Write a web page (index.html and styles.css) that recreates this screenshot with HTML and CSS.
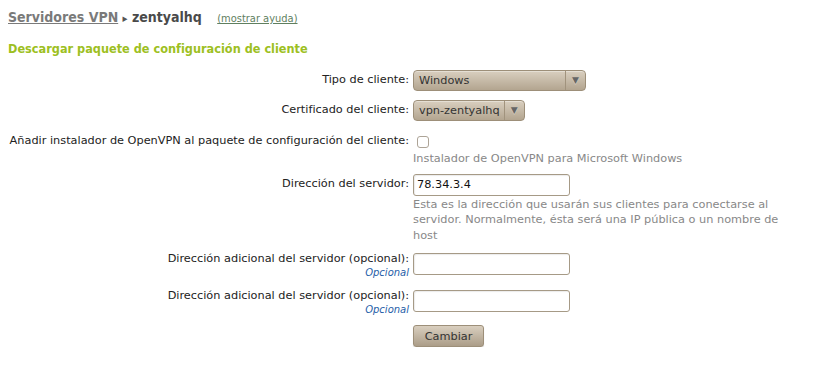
FILE: index.html
```html
<!DOCTYPE html>
<html lang="es">
<head>
<meta charset="utf-8">
<link rel="stylesheet" href="styles.css">
</head>
<body>
<div class="page">
  <h1 class="title"><a class="crumb" href="#">Servidores VPN</a> <span class="sep">&#9656;</span> zentyalhq <a class="help" href="#">(mostrar ayuda)</a></h1>
  <h2 class="subtitle">Descargar paquete de configuración de cliente</h2>
  <div class="form">
    <div class="label">Tipo de cliente:</div>
    <div class="field">
      <div class="select wide"><span class="sel-text">Windows</span><span class="sel-arrow">&#9660;</span></div>
    </div>

    <div class="label">Certificado del cliente:</div>
    <div class="field">
      <div class="select"><span class="sel-text">vpn-zentyalhq</span><span class="sel-arrow">&#9660;</span></div>
    </div>

    <div class="label check">Añadir instalador de OpenVPN al paquete de configuración del cliente:</div>
    <div class="field">
      <span class="checkbox"></span>
      <div class="note short">Instalador de OpenVPN para Microsoft Windows</div>
    </div>

    <div class="label">Dirección del servidor:</div>
    <div class="field">
      <div class="input">78.34.3.4</div>
      <div class="note long">Esta es la dirección que usarán sus clientes para conectarse al servidor. Normalmente, ésta será una IP pública o un nombre de host</div>
    </div>

    <div class="label opt">Dirección adicional del servidor (opcional):<div class="optional">Opcional</div></div>
    <div class="field opt">
      <div class="input"></div>
    </div>

    <div class="label opt">Dirección adicional del servidor (opcional):<div class="optional">Opcional</div></div>
    <div class="field opt">
      <div class="input"></div>
    </div>

    <div class="label"></div>
    <div class="field">
      <button class="button" type="button">Cambiar</button>
    </div>
  </div>
</div>
</body>
</html>
```
FILE: styles.css
```css
html, body {
  margin: 0;
  padding: 0;
  background: #ffffff;
}
body {
  font-family: "DejaVu Sans", Verdana, sans-serif;
  font-size: 11.3px;
  color: #222;
}
.page {
  padding: 7px 8px 0 8px;
}
.title {
  margin: 0;
  font-family: "DejaVu Sans Condensed", "DejaVu Sans", sans-serif;
  font-size: 14px;
  letter-spacing: 0;
  font-weight: bold;
  color: #4a4a4a;
  line-height: 20px;
}
.crumb {
  color: #7a7a7a;
  text-decoration: underline;
}
.sep {
  font-size: 11px;
  color: #555;
}
.help {
  margin-left: 11px;
  font-family: "DejaVu Sans Condensed", "DejaVu Sans", sans-serif;
  font-size: 11px;
  letter-spacing: 0;
  font-weight: normal;
  color: #5f7f5f;
  text-decoration: underline;
}
.subtitle {
  margin: 11px 0 0 0;
  font-family: "DejaVu Sans Condensed", "DejaVu Sans", sans-serif;
  font-size: 12.6px;
  font-weight: bold;
  color: #9dbf22;
  line-height: 18px;
}
.form {
  display: grid;
  grid-template-columns: 401px 1fr;
  column-gap: 4px;
  row-gap: 9px;
  margin-top: 12px;
}
.label {
  text-align: right;
  line-height: 15px;
  padding-top: 2px;
  color: #222;
  white-space: nowrap;
}
.label.check {
  padding-top: 3px;
}
.label.opt {
  padding-top: 2px;
  margin-bottom: -2px;
}
.field {
  display: flex;
  flex-direction: column;
  align-items: flex-start;
}
.field.opt {
  padding-top: 4px;
}
.select {
  display: flex;
  align-items: stretch;
  height: 19px;
  border: 1px solid #9d8f79;
  border-radius: 4px;
  background: linear-gradient(#d9cfbf, #b3a590);
  color: #333;
  box-shadow: inset 0 1px 0 rgba(255,255,255,0.35);
}
.select.wide {
  width: 171px;
}
.sel-text {
  flex: 1;
  padding: 3px 4px 0 5px;
  white-space: nowrap;
}
.sel-arrow {
  width: 19px;
  border-left: 1px solid #a1937d;
  font-size: 9px;
  color: #666;
  text-align: center;
  padding-top: 4px;
  text-shadow: 0 1px 0 rgba(255,255,255,0.4);
}
.checkbox {
  display: block;
  box-sizing: border-box;
  width: 12px;
  height: 12px;
  margin: 6px 0 0 4px;
  border: 1px solid #ada497;
  border-radius: 3px;
  background: #fff;
}
.note {
  color: #888;
  line-height: 15.5px;
  margin-top: 3px;
  max-width: 378px;
}
.note.short {
  margin-bottom: -2px;
}
.note.long {
  margin-top: 1px;
  margin-bottom: -3px;
}
.input {
  box-sizing: border-box;
  width: 157px;
  height: 22px;
  border: 1px solid #a69a86;
  border-radius: 3px;
  background: #fff;
  padding: 3px 3px 0 3px;
  color: #111;
  font-size: 11.3px;
  box-shadow: inset 1px 1px 1px rgba(0,0,0,0.08);
}
.optional {
  font-style: italic;
  font-size: 10px;
  color: #1f5ea8;
  line-height: 13px;
}
.button {
  width: 71px;
  height: 22px;
  margin-top: 2px;
  border: 1px solid #9d8f79;
  border-radius: 3px;
  background: linear-gradient(#d9cfbf, #ab9d88);
  color: #333;
  font-family: "DejaVu Sans", sans-serif;
  font-size: 11.3px;
  padding: 0;
  box-shadow: 0 1px 1px rgba(0,0,0,0.15);
}
```
